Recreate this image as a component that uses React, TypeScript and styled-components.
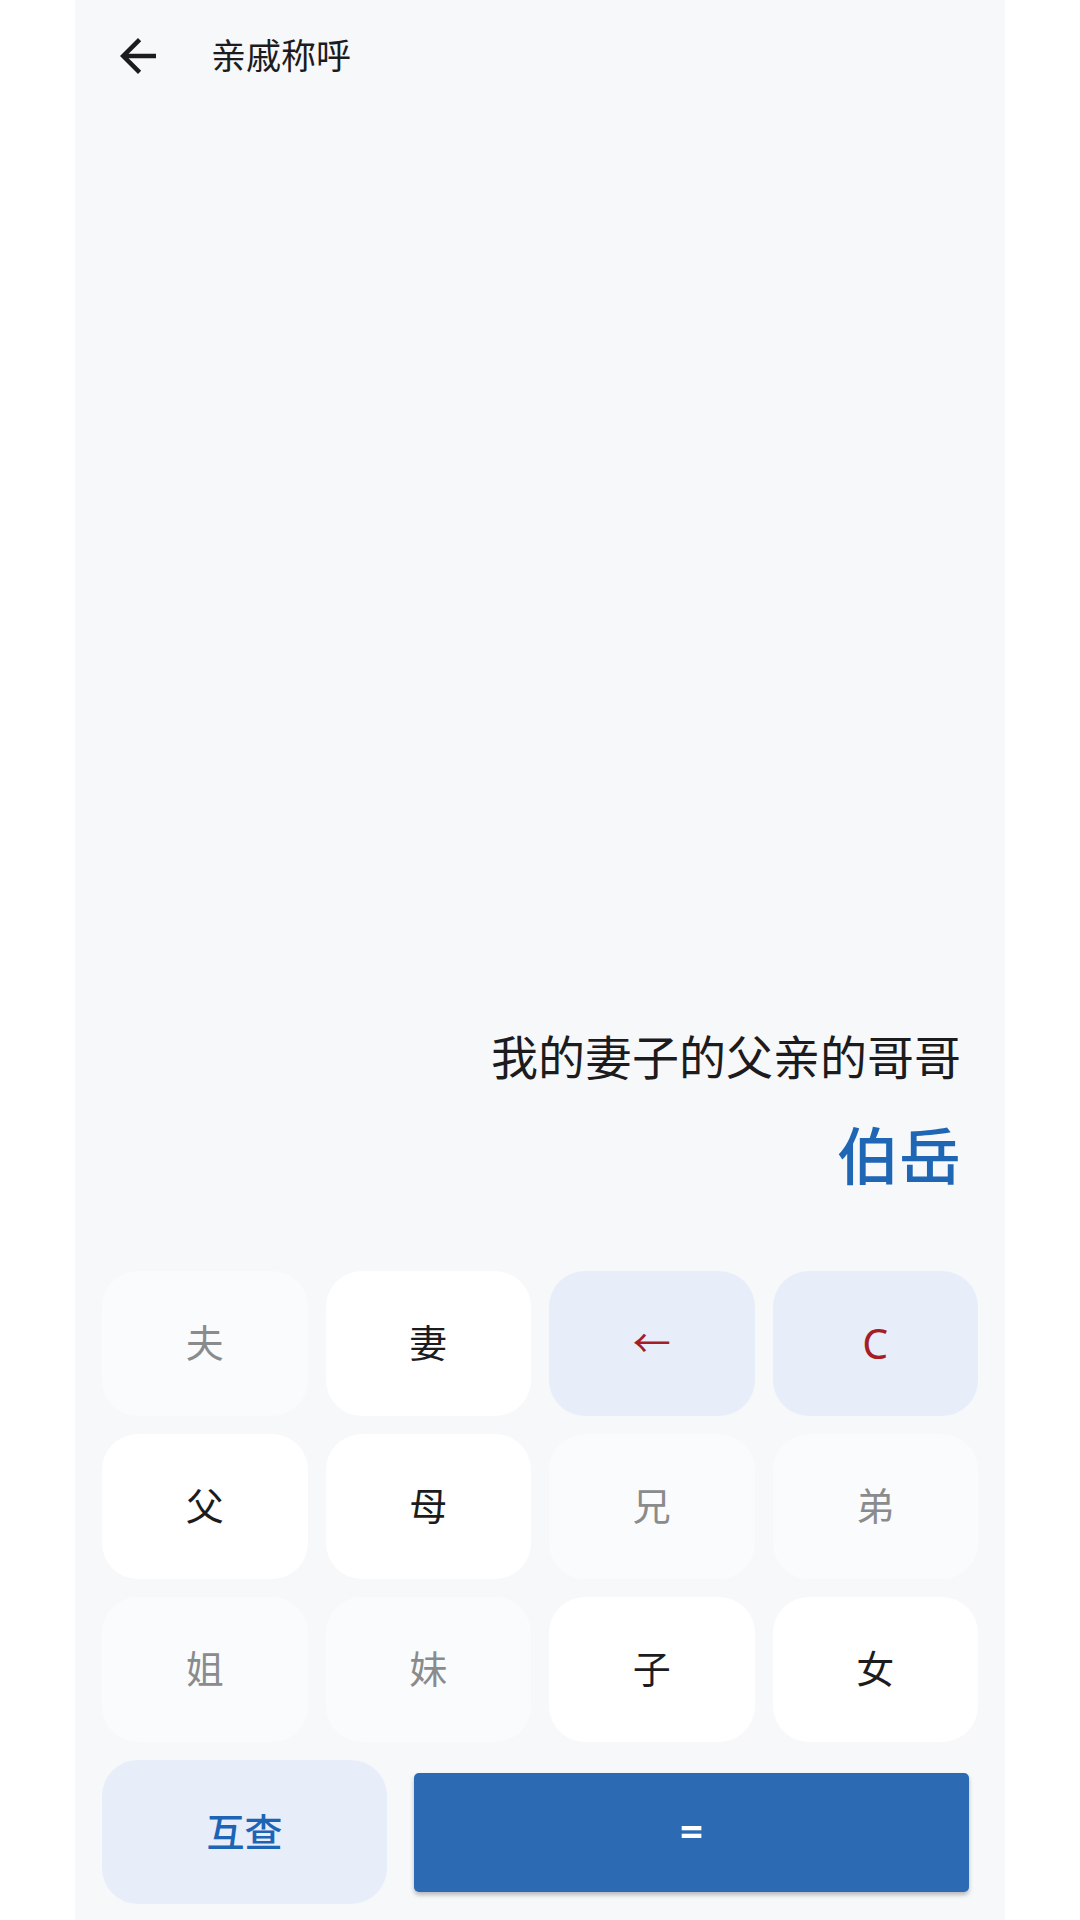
import React from "react";
import styled, { createGlobalStyle } from "styled-components";

const GlobalStyle = createGlobalStyle`
  html, body {
    margin: 0;
    padding: 0;
    background: #ffffff;
  }
  body {
    font-family: "Noto Sans CJK SC", "Noto Sans", sans-serif;
  }
`;

const Page = styled.div`
  width: 1080px;
  height: 1920px;
  display: flex;
  justify-content: center;
  background: #ffffff;
`;

const Panel = styled.div`
  width: 930px;
  height: 100%;
  display: flex;
  flex-direction: column;
  background: #f7f8fa;
`;

const Header = styled.header`
  height: 112px;
  display: flex;
  align-items: center;
  padding-left: 36px;
  gap: 46px;
`;

const BackButton = styled.button`
  width: 54px;
  height: 54px;
  padding: 0;
  border: none;
  background: transparent;
  display: flex;
  align-items: center;
  justify-content: center;
  color: #1c1c1e;
`;

const Title = styled.h1`
  margin: 0 0 5px;
  font-size: 35px;
  font-weight: 400;
  color: #1c1c1e;
`;

const Display = styled.section`
  flex: 1;
  display: flex;
  flex-direction: column;
  justify-content: flex-end;
  align-items: flex-end;
  padding: 0 44px 78px 0;
`;

const Expression = styled.div`
  font-size: 47px;
  line-height: 60px;
  color: #1c1c1e;
`;

const Result = styled.div`
  margin-top: 28px;
  font-size: 62px;
  line-height: 80px;
  font-weight: 500;
  color: #1f66b5;
`;

const Keypad = styled.div`
  padding: 0 27px 16px;
  display: flex;
  flex-direction: column;
  gap: 18px;
`;

const KeyGrid = styled.div`
  display: grid;
  grid-template-columns: repeat(4, 1fr);
  grid-auto-rows: 145px;
  gap: 18px;
`;

type KeyKind = "active" | "disabled" | "action";

const Key = styled.button<{ $kind: KeyKind; $latin?: boolean }>`
  border: none;
  border-radius: 36px;
  display: flex;
  align-items: center;
  justify-content: center;
  font-family: ${(p) =>
    p.$latin ? `"Noto Sans", sans-serif` : `"Noto Sans CJK SC", "Noto Sans", sans-serif`};
  font-size: ${(p) => (p.$latin ? "41px" : "38px")};
  padding: ${(p) => (p.$latin ? "0 0 2px" : "0 0 7px")};
  background: ${(p) =>
    p.$kind === "active" ? "#ffffff" : p.$kind === "action" ? "#e7eef9" : "#fafbfd"};
  color: ${(p) =>
    p.$kind === "active" ? "#1c1c1e" : p.$kind === "action" ? "#a51d25" : "#8a8b8d"};
`;

const BottomRow = styled.div`
  display: flex;
  gap: 18px;
  height: 144px;
`;

const SwapButton = styled.button`
  width: 285px;
  border: none;
  border-radius: 36px;
  padding: 0 0 6px;
  background: #e7eef9;
  color: #1d64b5;
  font-family: "Noto Sans CJK SC", "Noto Sans", sans-serif;
  font-size: 38px;
  font-weight: 500;
`;

const EqualsCell = styled.div`
  flex: 1;
  display: flex;
  padding: 13px 9px 12px;
`;

const EqualsButton = styled.button`
  flex: 1;
  border: none;
  border-radius: 5px;
  padding: 0 0 4px;
  background: #2c6ab4;
  color: #ffffff;
  font-family: "Noto Sans", sans-serif;
  font-size: 40px;
  font-weight: 700;
  box-shadow: 0 3px 4px rgba(0, 0, 0, 0.25);
`;

const keys: { label: string; kind: KeyKind; latin?: boolean }[] = [
  { label: "夫", kind: "disabled" },
  { label: "妻", kind: "active" },
  { label: "←", kind: "action" },
  { label: "C", kind: "action", latin: true },
  { label: "父", kind: "active" },
  { label: "母", kind: "active" },
  { label: "兄", kind: "disabled" },
  { label: "弟", kind: "disabled" },
  { label: "姐", kind: "disabled" },
  { label: "妹", kind: "disabled" },
  { label: "子", kind: "active" },
  { label: "女", kind: "active" },
];

const BackIcon = () => (
  <svg width="54" height="54" viewBox="0 0 24 24" fill="currentColor">
    <path d="M20 11H7.83l5.59-5.59L12 4l-8 8 8 8 1.41-1.41L7.83 13H20v-2z" />
  </svg>
);

export default function App() {
  return (
    <>
      <GlobalStyle />
      <Page>
        <Panel>
          <Header>
            <BackButton aria-label="返回">
              <BackIcon />
            </BackButton>
            <Title>亲戚称呼</Title>
          </Header>
          <Display>
            <Expression>我的妻子的父亲的哥哥</Expression>
            <Result>伯岳</Result>
          </Display>
          <Keypad>
            <KeyGrid>
              {keys.map((k) => (
                <Key key={k.label} $kind={k.kind} $latin={k.latin}>
                  {k.label}
                </Key>
              ))}
            </KeyGrid>
            <BottomRow>
              <SwapButton>互查</SwapButton>
              <EqualsCell>
                <EqualsButton>=</EqualsButton>
              </EqualsCell>
            </BottomRow>
          </Keypad>
        </Panel>
      </Page>
    </>
  );
}
